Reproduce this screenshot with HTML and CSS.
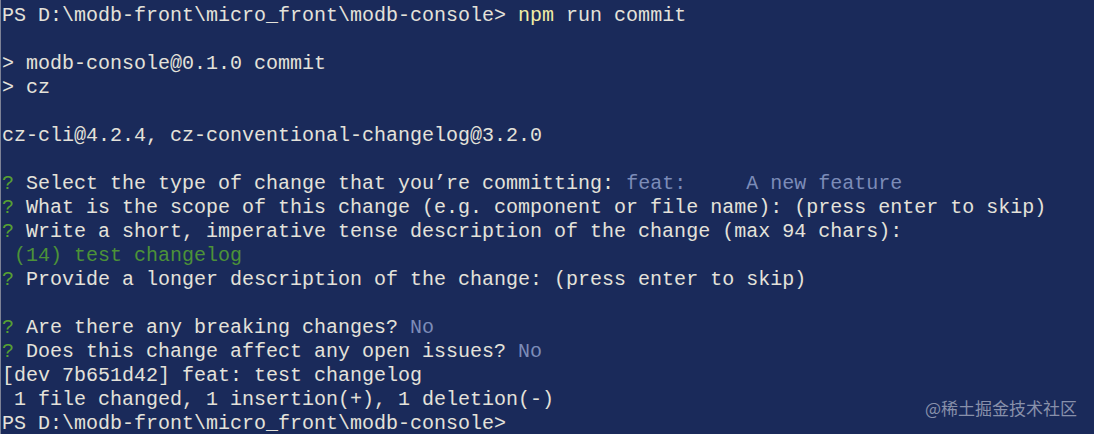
FILE: index.html
```html
<!DOCTYPE html>
<html lang="en">
<head>
<meta charset="utf-8">
<title>PowerShell - npm run commit</title>
<link rel="stylesheet" href="styles.css">
</head>
<body>
<div class="term">
  <div class="ln">PS D:\modb-front\micro_front\modb-console&gt; <span class="cmd">npm</span> run commit</div>
  <div class="ln"> </div>
  <div class="ln">&gt; modb-console@0.1.0 commit</div>
  <div class="ln">&gt; cz</div>
  <div class="ln"> </div>
  <div class="ln">cz-cli@4.2.4, cz-conventional-changelog@3.2.0</div>
  <div class="ln"> </div>
  <div class="ln"><span class="q">?</span> Select the type of change that you’re committing: <span class="ans">feat:     A new feature</span></div>
  <div class="ln"><span class="q">?</span> What is the scope of this change (e.g. component or file name): (press enter to skip)</div>
  <div class="ln"><span class="q">?</span> Write a short, imperative tense description of the change (max 94 chars):</div>
  <div class="ln"><span class="typed"> (14) test changelog</span></div>
  <div class="ln"><span class="q">?</span> Provide a longer description of the change: (press enter to skip)</div>
  <div class="ln"> </div>
  <div class="ln"><span class="q">?</span> Are there any breaking changes? <span class="ans">No</span></div>
  <div class="ln"><span class="q">?</span> Does this change affect any open issues? <span class="ans">No</span></div>
  <div class="ln">[dev 7b651d42] feat: test changelog</div>
  <div class="ln"> 1 file changed, 1 insertion(+), 1 deletion(-)</div>
  <div class="ln">PS D:\modb-front\micro_front\modb-console&gt;</div>
</div>
<div class="watermark">@稀土掘金技术社区</div>
</body>
</html>
```

FILE: styles.css
```css
html, body {
  margin: 0;
  padding: 0;
  height: 100%;
  overflow: hidden;
}

body {
  background: #1a2a5a;
  border-left: 1px solid #7d8296;
  box-sizing: border-box;
  position: relative;
}

.term {
  padding: 4px 0 0 1px;
  font-family: "Liberation Mono", "DejaVu Sans Mono", monospace;
  font-size: 20px;
  line-height: 24px;
  color: #e4e2da;
}

.ln {
  white-space: pre;
  height: 24px;
}

.cmd {
  color: #f1eda6;
}

.q {
  color: #57a032;
}

.typed {
  color: #4c9238;
}

.ans {
  color: #7c8cb8;
}

.watermark {
  position: absolute;
  right: 17px;
  bottom: 15px;
  font-family: "Noto Sans CJK SC", "Noto Sans", sans-serif;
  font-size: 17px;
  line-height: 22px;
  color: #8890aa;
}
```
